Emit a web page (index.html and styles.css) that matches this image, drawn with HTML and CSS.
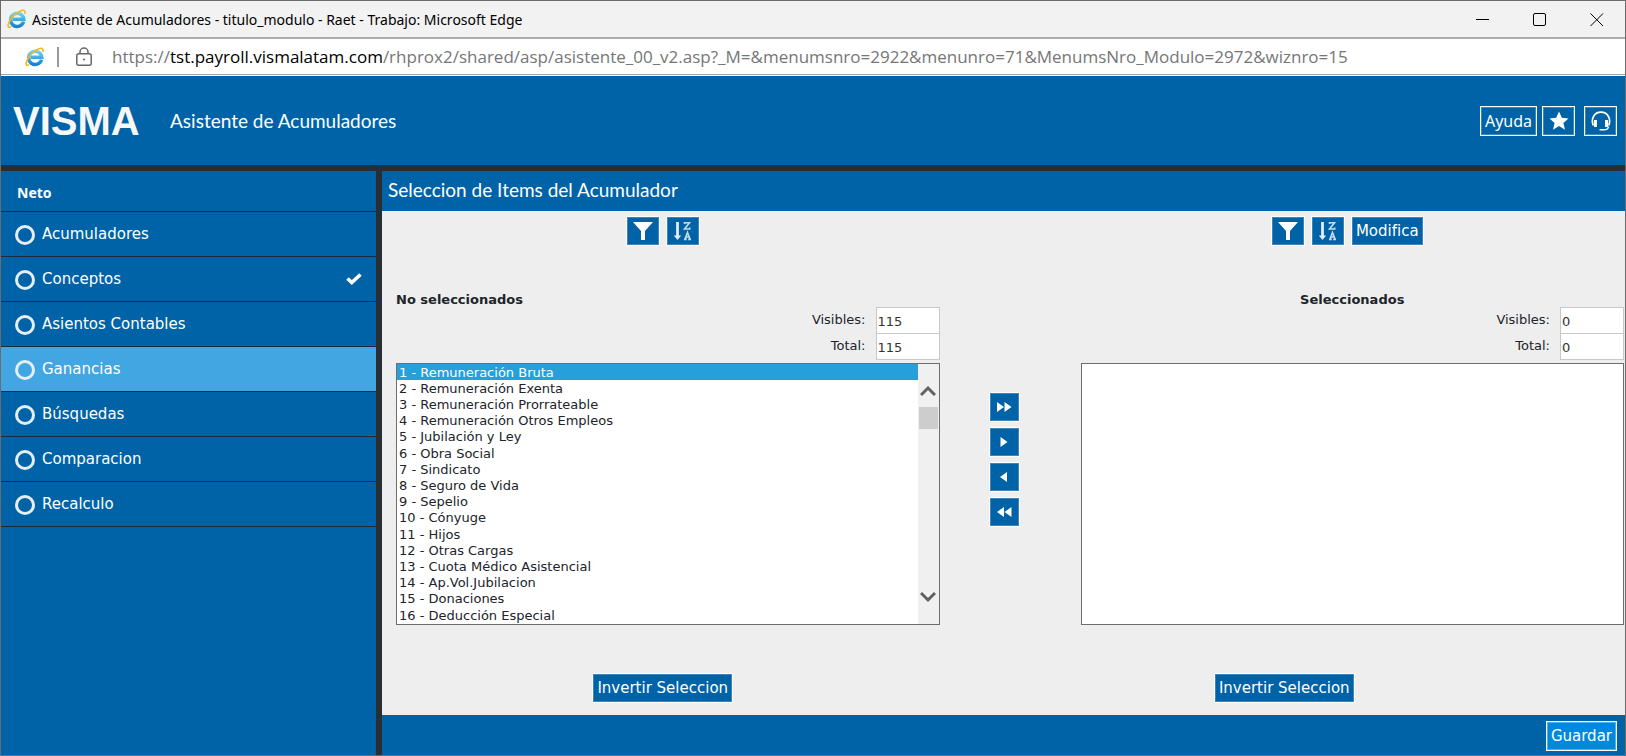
FILE: index.html
```html
<!DOCTYPE html>
<html lang="es">
<head>
<meta charset="utf-8">
<title>Asistente de Acumuladores</title>
<link rel="stylesheet" href="styles.css">
</head>
<body>
<svg class="defs" width="0" height="0" aria-hidden="true">
  <defs>
    <linearGradient id="blue" x1="0" y1="0" x2="0" y2="1">
      <stop offset="0" stop-color="#6fd3f7"/><stop offset="1" stop-color="#1583d0"/>
    </linearGradient>
    <symbol id="browser" viewBox="0 0 20 20">
      <path d="M16.600 12.600A6.600 6.600 0 1 1 16.800 10.200H5.800" fill="none" stroke="url(#blue)" stroke-width="3.400"/>
      <path d="M3.600 17.800C1.400 19.200.4 17.600 1.600 14.400 3.400 9.600 8 4.600 13 2.200c3.600-1.700 5.600-.9 4.900 2" fill="none" stroke="#f3b824" stroke-width="1.600" stroke-linecap="round"/>
    </symbol>
    <symbol id="funnel" viewBox="0 0 20 20"><path d="M0 1h20l-8 9v9H8v-9z" fill="#fff"/></symbol>
    <symbol id="sort" viewBox="0 0 20 20">
      <path d="M4.500 1v14" stroke="#e4eef6" stroke-width="2.800" fill="none"/>
      <path d="M.8 14.500h7.400L4.500 19z" fill="#e4eef6"/>
      <path d="M11.500 3V1.800h5L11.500 8h5.200V6.600M11 18.400h2.800M15.200 18.400H18M12 18l2.500-6.500L17 18M13 16h3.200" fill="none" stroke="#c5dbea" stroke-width="1.600"/>
    </symbol>
  </defs>
</svg>

<div class="window">
  <div class="titlebar">
    <svg class="logo-e"><use href="#browser"/></svg>
    <span class="titlebar-text">Asistente de Acumuladores - titulo_modulo - Raet - Trabajo: Microsoft Edge</span>
    <div class="window-controls">
      <button type="button" aria-label="Minimizar"><svg viewBox="0 0 14 14"><path d="M0 6.500h13"/></svg></button>
      <button type="button" aria-label="Maximizar"><svg viewBox="0 0 14 14"><rect x=".5" y=".5" width="12" height="12" rx="1.500"/></svg></button>
      <button type="button" aria-label="Cerrar"><svg viewBox="0 0 14 14"><path d="M.5.5l12.500 12.500M13 .5L.5 13"/></svg></button>
    </div>
  </div>

  <div class="addressbar">
    <svg class="logo-e"><use href="#browser"/></svg>
    <span class="divider"></span>
    <svg class="lock" viewBox="0 0 16 20"><rect x=".8" y="6.800" width="14.400" height="11.400" rx="2"/><path d="M4 6.800V5a4 4 0 0 1 8 0v1.800"/><circle cx="8" cy="12.500" r="1"/></svg>
    <span class="url">https://<b>tst.payroll.vismalatam.com</b>/rhprox2/shared/asp/asistente_00_v2.asp?_M=&amp;menumsnro=2922&amp;menunro=71&amp;MenumsNro_Modulo=2972&amp;wiznro=15</span>
  </div>

  <header class="header">
    <span class="brand">VISMA</span>
    <h1>Asistente de Acumuladores</h1>
    <div class="header-actions">
      <button type="button" class="btn btn-help">Ayuda</button>
      <button type="button" class="btn btn-square" aria-label="Favoritos"><svg viewBox="0 0 20 20"><path d="M10 .5l2.800 6.300 6.700.6-5.100 4.500 1.600 6.800-6-3.700-6 3.700 1.600-6.800L.5 7.400l6.700-.6z" fill="#fff"/></svg></button>
      <button type="button" class="btn btn-square btn-support" aria-label="Soporte"><svg viewBox="0 0 20 20" fill="none" stroke="#fff"><path d="M2.300 14.500C-.5 7.500 3.500 1.200 10 1.200S20.500 7.500 17.700 14.500" stroke-width="1.700"/><path d="M4.500 9v7M15.500 9v7" stroke-width="3"/><path d="M17.500 15.500c-.3 2.800-2 3.300-4.500 3.300M8.500 18.700h5" stroke-width="1.500"/></svg></button>
    </div>
  </header>

  <div class="workspace">
    <nav class="sidebar">
      <h2>Neto</h2>
      <a href="#"><span class="ring"></span>Acumuladores</a>
      <a href="#"><span class="ring"></span>Conceptos<svg class="check" viewBox="0 0 16 12"><path d="M1.500 5.500l4.300 4L14.500 1.500" fill="none" stroke="#fff" stroke-width="3.600"/></svg></a>
      <a href="#"><span class="ring"></span>Asientos Contables</a>
      <a href="#" class="active"><span class="ring"></span>Ganancias</a>
      <a href="#"><span class="ring"></span>Búsquedas</a>
      <a href="#"><span class="ring"></span>Comparacion</a>
      <a href="#"><span class="ring"></span>Recalculo</a>
    </nav>

    <main class="main">
      <h2 class="main-title">Seleccion de Items del Acumulador</h2>
      <div class="picker">
        <section class="column">
          <div class="tools">
            <button type="button" class="btn btn-icon" aria-label="Filtrar"><svg><use href="#funnel"/></svg></button>
            <button type="button" class="btn btn-icon" aria-label="Ordenar"><svg><use href="#sort"/></svg></button>
          </div>
          <h3>No seleccionados</h3>
          <div class="counts">
            <label for="v1">Visibles:</label><input id="v1" type="text" value="115">
            <label for="t1">Total:</label><input id="t1" type="text" value="115">
          </div>
          <div class="listbox">
            <select multiple aria-label="No seleccionados">
              <option selected>1 - Remuneración Bruta</option>
              <option>2 - Remuneración Exenta</option>
              <option>3 - Remuneración Prorrateable</option>
              <option>4 - Remuneración Otros Empleos</option>
              <option>5 - Jubilación y Ley</option>
              <option>6 - Obra Social</option>
              <option>7 - Sindicato</option>
              <option>8 - Seguro de Vida</option>
              <option>9 - Sepelio</option>
              <option>10 - Cónyuge</option>
              <option>11 - Hijos</option>
              <option>12 - Otras Cargas</option>
              <option>13 - Cuota Médico Asistencial</option>
              <option>14 - Ap.Vol.Jubilacion</option>
              <option>15 - Donaciones</option>
              <option>16 - Deducción Especial</option>
            </select>
            <div class="scrollbar" aria-hidden="true">
              <svg viewBox="0 0 16 12"><path d="M1 10l7-7 7 7"/></svg>
              <span class="thumb"></span>
              <svg class="down" viewBox="0 0 16 12"><path d="M1 2l7 7 7-7"/></svg>
            </div>
          </div>
          <div class="invert"><button type="button" class="btn">Invertir Seleccion</button></div>
        </section>

        <div class="movers">
          <button type="button" class="btn" aria-label="Agregar todos"><svg viewBox="0 0 16 10"><path d="M1 0l7 5-7 5zM8.500 0l7 5-7 5z"/></svg></button>
          <button type="button" class="btn" aria-label="Agregar"><svg viewBox="0 0 16 10"><path d="M4.500 0l7 5-7 5z"/></svg></button>
          <button type="button" class="btn" aria-label="Quitar"><svg viewBox="0 0 16 10"><path d="M11 0L4 5l7 5z"/></svg></button>
          <button type="button" class="btn" aria-label="Quitar todos"><svg viewBox="0 0 16 10"><path d="M8 0L1 5l7 5zM15.500 0l-7 5 7 5z"/></svg></button>
        </div>

        <section class="column column-selected">
          <div class="tools">
            <button type="button" class="btn btn-icon" aria-label="Filtrar"><svg><use href="#funnel"/></svg></button>
            <button type="button" class="btn btn-icon" aria-label="Ordenar"><svg><use href="#sort"/></svg></button>
            <button type="button" class="btn">Modifica</button>
          </div>
          <h3>Seleccionados</h3>
          <div class="counts">
            <label for="v2">Visibles:</label><input id="v2" type="text" value="0">
            <label for="t2">Total:</label><input id="t2" type="text" value="0">
          </div>
          <div class="listbox"><select multiple aria-label="Seleccionados"></select></div>
          <div class="invert"><button type="button" class="btn">Invertir Seleccion</button></div>
        </section>
      </div>
      <footer class="footer"><button type="button" class="btn btn-save">Guardar</button></footer>
    </main>
  </div>
</div>
</body>
</html>
```
FILE: styles.css
```css
* { box-sizing: border-box; }
body { margin: 0; font-family: "DejaVu Sans", Verdana, sans-serif; color: #20242a; }
h1, h2, h3 { margin: 0; font-weight: normal; }
button { font: inherit; }
svg { display: block; flex: none; }
.defs { position: absolute; }

.window { display: flex; flex-direction: column; min-height: 100vh; border: 1px solid #6b6b6b; }

.titlebar { display: flex; align-items: center; height: 38px; padding-left: 6px; background: #f2f2f2; border-bottom: 2px solid #adadad; font-family: "Noto Sans", sans-serif; }
.logo-e { width: 20px; height: 20px; }
.titlebar-text { margin-left: 5px; font-size: 14px; color: #000; }
.window-controls { display: flex; margin-left: auto; }
.window-controls button { display: flex; justify-content: center; width: 57px; padding: 2px 0 0; border: 0; background: none; }
.window-controls svg { width: 14px; height: 14px; fill: none; stroke: #000; }

.addressbar { display: flex; align-items: center; height: 36px; padding-left: 24px; background: #fff; border-bottom: 1px solid #a6a6a6; margin-bottom: 1px; font-family: "Open Sans", sans-serif; font-size: 17px; color: #767676; }
.divider { width: 2px; height: 20px; margin-left: 12px; background: #999; }
.lock { width: 16px; height: 20px; margin: 0 20px 0 17px; fill: none; stroke: #666; stroke-width: 1.5; }
.lock circle { fill: #666; stroke: none; }
.url { white-space: nowrap; }
.url b { font-weight: normal; color: #000; }

.header { display: flex; align-items: center; height: 89px; padding: 0 8px 0 12px; background: #0063a7; color: #fff; }
.brand { width: 127px; font: bold 40px/50px "Liberation Sans", Arial, sans-serif; color: #f7f7f7; }
.header h1 { margin-left: 30px; font: 19px Lato, Calibri, sans-serif; }
.header-actions { display: flex; gap: 5px; margin-left: auto; }

.btn { display: flex; align-items: center; justify-content: center; height: 30px; padding: 0 4px; border: 1px solid #fff; box-shadow: inset 0 0 0 1px #3a86bd; background: #0063a7; color: #fff; font-size: 15px; white-space: nowrap; }
.btn-help { width: 57px; font-family: "Noto Sans", sans-serif; font-size: 16px; }
.btn-square { width: 33px; }
.btn-square svg { width: 20px; height: 20px; }
.btn-support { margin-left: 4px; }
.btn-save { background: #0089dc; box-shadow: inset 0 0 0 1px #4db0ea; }

.workspace { display: grid; grid-template-columns: 375px 1fr; gap: 6px; flex: 1; padding-top: 6px; background: #292e33; }
.sidebar { background: #0063a7; }
.sidebar h2 { height: 41px; padding: 2px 0 0 16px; border-bottom: 1px solid #1d2b38; font: bold 14px/40px "Noto Sans", sans-serif; color: #fff; }
.sidebar a { display: flex; align-items: center; height: 45px; padding: 0 14px; border-bottom: 1px solid #1d2b38; font-size: 15px; color: #fff; text-decoration: none; }
.sidebar .active { background: #41a6e2; }
.ring { width: 20px; height: 20px; margin: 2px 7px 0 0; border: 3px solid #e6eef5; border-radius: 50%; }
.check { width: 16px; height: 12px; margin-left: auto; }

.main { display: flex; flex-direction: column; background: #eee; }
.main-title { height: 40px; padding-left: 6px; background: #0063a7; color: #fff; font: 19px/38px Lato, Calibri, sans-serif; }
.picker { display: grid; grid-template-columns: 1fr 141px 1fr; flex: 1; padding: 5px 1px 0 14px; }
.column { display: flex; flex-direction: column; }
.tools { display: flex; justify-content: center; gap: 6px; padding-right: 10px; }
.btn-icon { width: 34px; }
.btn-icon svg { width: 20px; height: 20px; }
.column h3 { margin-top: 46px; font: bold 13px/15px "DejaVu Sans", Verdana, sans-serif; }
.column-selected h3 { text-align: center; }
.counts { display: grid; grid-template-columns: 1fr 64px; column-gap: 10px; font-size: 13px; line-height: 26px; text-align: right; }
.counts input { width: 100%; height: 27px; margin-bottom: -1px; padding: 2px 1px 0; border: 1px solid #c8c8c8; background: #fff; font: inherit; color: #333; }
.listbox { display: flex; height: 262px; margin-top: 4px; border: 1px solid #6d6d6d; background: #fff; }
.listbox select { flex: 1; height: 100%; padding: 0; border: 0; border-radius: 0; outline: 0; overflow: hidden; background: #fff; font: 13px/15px "DejaVu Sans", Verdana, sans-serif; color: #20242a; }
.listbox option { min-height: 16px; padding: 1px 2px 0; line-height: 15px; }
.listbox option:nth-child(5n) { padding-bottom: 1px; }
.listbox option:checked { background: linear-gradient(#269fdb, #269fdb); -webkit-text-fill-color: #fff; }
.scrollbar { display: flex; flex-direction: column; align-items: center; width: 21px; padding: 21px 0; background: #f0f0f0; }
.scrollbar svg { width: 16px; height: 12px; fill: none; stroke: #606060; stroke-width: 3; }
.thumb { width: 19px; height: 22px; margin-top: 10px; background: #cdcdcd; }
.scrollbar .down { margin-top: auto; }
.invert { display: flex; justify-content: center; margin-top: 48px; padding-right: 10px; }
.column-selected .invert { padding-right: 136px; }

.movers { display: flex; flex-direction: column; align-items: center; gap: 5px; padding: 176px 12px 0 0; }
.movers .btn { width: 31px; padding: 0; }
.movers svg { width: 16px; height: 10px; fill: #fff; }

.footer { display: flex; align-items: center; justify-content: flex-end; height: 40px; padding: 2px 8px 0; background: #0063a7; }
```
